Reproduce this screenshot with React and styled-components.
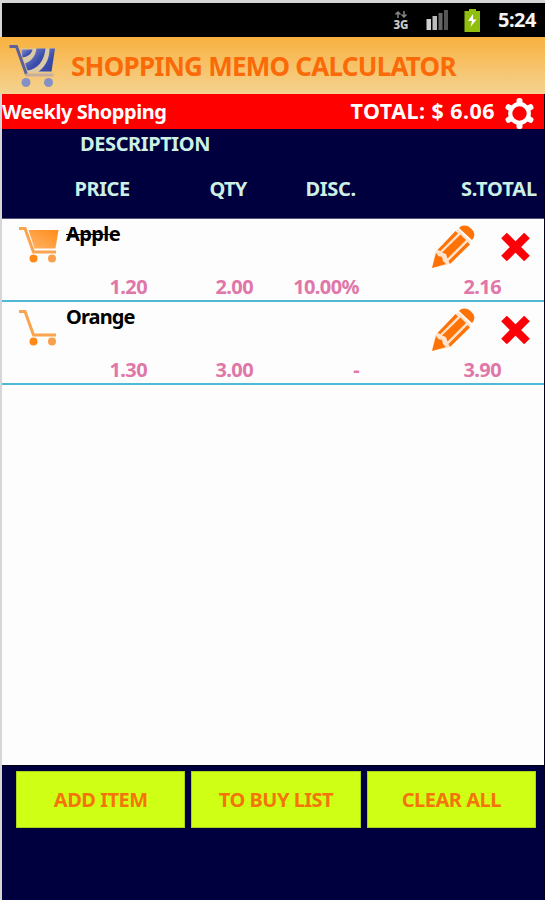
import styled, { createGlobalStyle } from 'styled-components';

const GlobalStyle = createGlobalStyle`
  * {
    box-sizing: border-box;
  }
  body {
    margin: 0;
    background: #d6d6d8;
  }
`;

const Screen = styled.div`
  width: 545px;
  height: 900px;
  padding-top: 3px;
  display: flex;
  flex-direction: column;
  overflow: hidden;
  background: #d6d6d8;
  font-family: 'Noto Sans', 'Open Sans', sans-serif;
  font-weight: 700;
  font-size: 20px;
  white-space: nowrap;
`;

const StatusBar = styled.div`
  height: 34px;
  flex: none;
  margin-left: 2px;
  padding-right: 9px;
  display: flex;
  align-items: center;
  justify-content: flex-end;
  background: #000;
`;

const StatusIcon = styled.svg`
  flex: none;
  display: block;
  margin-right: ${(props) => props.$gap}px;
`;

const Clock = styled.span`
  color: #f4f4f4;
  font-size: 20px;
  line-height: 34px;
  letter-spacing: -0.5px;
`;

const Header = styled.header`
  height: 57px;
  flex: none;
  padding-left: 8px;
  display: flex;
  align-items: center;
  background: linear-gradient(#f8b13f, #f5d391);
`;

const Title = styled.h1`
  margin: 0 0 0 13px;
  padding-top: 2px;
  color: #fb6a08;
  font-size: 26px;
  line-height: 55px;
  letter-spacing: -0.75px;
`;

const Body = styled.div`
  flex: 1;
  margin-left: 2px;
  display: flex;
  flex-direction: column;
  border-right: 1px solid #000018;
`;

const TotalBar = styled.div`
  height: 35px;
  flex: none;
  padding-right: 9px;
  display: flex;
  background: #fe0000;
  color: #fff;
  line-height: 35px;
`;

const ListName = styled.span`
  flex: 1;
  letter-spacing: -0.45px;
`;

const Total = styled.span`
  font-size: 21.5px;
  line-height: 34px;
  letter-spacing: 0.45px;
  margin-right: 9px;
`;

const GearIcon = styled.svg`
  display: block;
  margin-top: 4px;
`;

const TableHead = styled.div`
  height: 90px;
  flex: none;
  background: #00003f;
  color: #cdf0e4;
  line-height: 29px;
  letter-spacing: -0.4px;
  border-bottom: 1px solid #55557a;
`;

const HeadDescription = styled.div`
  padding-left: 78px;
`;

const HeadColumns = styled.div`
  margin-top: 16px;
  padding: 0 7px 0 72.5px;
  display: grid;
  grid-template-columns: 135px 96px 1fr auto;
`;

const HeadCell = styled.span`
  letter-spacing: ${(props) => props.$spacing}px;
`;

const List = styled.div`
  flex: 1;
  background: #fdfdfd;
`;

const Row = styled.div`
  height: 83px;
  border-bottom: 2px solid #50b9d6;
`;

const RowTop = styled.div`
  height: 54px;
  padding: 0 13px 0 16px;
  display: flex;
`;

const CartIcon = styled.svg`
  display: block;
  margin: 7px 6px 0 0;
`;

const ItemName = styled.span`
  flex: 1;
  color: #000;
  line-height: 30px;
  letter-spacing: ${(props) => (props.$bought ? -0.6 : -0.9)}px;
  text-decoration: ${(props) => (props.$bought ? 'line-through' : 'none')};
  text-decoration-thickness: 1px;
`;

const ActionIcon = styled.svg`
  display: block;
  margin: ${(props) => props.$top}px 0 0 ${(props) => props.$left}px;
`;

const Figures = styled.div`
  display: grid;
  grid-template-columns: 145px 106px 106px 142px;
  color: #e077a8;
  line-height: 27px;
  letter-spacing: -0.6px;
  text-align: right;
`;

const Footer = styled.footer`
  height: 135px;
  flex: none;
  padding: 5px 8px 0 14px;
  display: flex;
  align-items: flex-start;
  gap: 6px;
  background: #00003f;
  border-top: 1px solid #000010;
`;

const Button = styled.button`
  flex: 1;
  height: 57px;
  padding: 0;
  border: 1px solid #a9d41c;
  background: #d0ff16;
  color: #f5740a;
  font: inherit;
  letter-spacing: -0.5px;
`;

const items = [
  { name: 'Apple', price: '1.20', qty: '2.00', disc: '10.00%', total: '2.16', bought: true },
  { name: 'Orange', price: '1.30', qty: '3.00', disc: '-', total: '3.90', bought: false },
];

const Logo = () => (
  <svg width="50" height="46" viewBox="0.500 0.500 50 46" fill="none">
    <defs>
      <linearGradient id="logo" x1="0" y1="0" x2="1" y2="1">
        <stop offset="0" stopColor="#8a95cb" />
        <stop offset="0.6" stopColor="#3a4cab" />
        <stop offset="1" stopColor="#33409a" />
      </linearGradient>
    </defs>
    <path d="M13 6H47L43 30H19Z" fill="#dcc9a6" />
    <path d="M14 7H25C24 11 21 14 15 15Z" fill="url(#logo)" />
    <path d="M29 6H38C37 18 30 27 20 28L17.500 21C25 18 28 13 29 6Z" fill="url(#logo)" />
    <path d="M42 6H47.500L44 29H31C39 23 42 15 42 6Z" fill="url(#logo)" />
    <path d="M2 4H9L19 32" stroke="#5c619c" strokeWidth="3" />
    <path d="M18 32.500H46" stroke="#c5aea0" strokeWidth="3" />
    <circle cx="18.500" cy="40" r="4.500" fill="#8490c6" />
    <circle cx="41" cy="40" r="4.500" fill="#8490c6" />
  </svg>
);

const Cart = ({ full }) => (
  <CartIcon width="42" height="38" viewBox="0 0 42 38" fill="none">
    <defs>
      <linearGradient id="cart" x1="0" y1="1" x2="1" y2="0">
        <stop offset="0" stopColor="#ffb366" />
        <stop offset="1" stopColor="#ff8c1a" />
      </linearGradient>
    </defs>
    {full && <path d="M10.500 4H40.500L37.500 22.500H16.500Z" fill="url(#cart)" />}
    <path d="M1 2.500H7L15.500 26H38" stroke="#fba44f" strokeWidth="3" />
    <circle cx="15.500" cy="32.500" r="4" fill="#ff8a17" />
    <circle cx="34" cy="32.500" r="4" fill="#fba04a" />
  </CartIcon>
);

const Pencil = () => (
  <ActionIcon $top={6} $left={0} width="44" height="44" viewBox="0 0 44 44">
    <path d="M27 4L40 17L17 40L1 43L4 27Z" fill="#ffe3cc" />
    <g fill="#ff7306">
      <path d="M28 3C31 -1 37 0 40 3.500C44 7 44.500 11 41 15Z" />
      <path d="M24.500 6L27 8.500L9.500 26L6.500 25Z" />
      <path d="M29.500 9.500L35 15L16.500 33.500L15 29L11 27.500Z" />
      <path d="M36.500 17L39 19.500L19 39L17.500 36Z" />
      <path d="M5 28L7.500 31L11 32L12 36L15 39L1 43Z" />
    </g>
  </ActionIcon>
);

const Cross = () => (
  <ActionIcon $top={13} $left={25} width="31" height="31" viewBox="0 0 31 31">
    <path d="M4 3.500L27 26.500M27 3.500L4 26.500" stroke="#fb0007" strokeWidth="8" />
  </ActionIcon>
);

const Gear = () => (
  <GearIcon width="31" height="31" viewBox="-15.5 -15.500 31 31">
    {[0, 60, 120, 180, 240, 300].map((angle) => (
      <rect key={angle} x="-3" y="-15.500" width="6" height="8" rx="2.500" fill="#fff" transform={`rotate(${angle})`} />
    ))}
    <circle r="9.300" fill="none" stroke="#fff" strokeWidth="4.200" />
  </GearIcon>
);

const App = () => {
  return (
    <>
      <GlobalStyle />
      <Screen>
        <StatusBar>
          <StatusIcon $gap={17} width="16" height="22" viewBox="0 0 16 22">
            <path d="M5 9V3M2.500 5.500L5 3L7.500 5.500M11 2V8M8.500 5.500L11 8L13.500 5.500" fill="none" stroke="#888" strokeWidth="1.500" />
            <text x="8" y="20" textAnchor="middle" fontSize="11.500" fontWeight="800" fill="#c9c9c9">3G</text>
          </StatusIcon>
          <StatusIcon $gap={15} width="23" height="22" viewBox="0 0 23 22">
            <rect x="0.500" y="10" width="4.500" height="11" fill="#d0d0d0" />
            <rect x="6.500" y="7" width="4.500" height="14" fill="#bcbcbc" />
            <rect x="12.500" y="4" width="4" height="17" fill="#666" />
            <rect x="18" y="1" width="4" height="20" fill="#555" />
          </StatusIcon>
          <StatusIcon $gap={17} width="17" height="23" viewBox="0 0 17 23">
            <path d="M5 0H12V2H16V23H0.500V2H5Z" fill="#8fbf0c" />
            <path d="M9 5L4 12H8L6.500 18L12.500 10.500H9Z" fill="#fff" />
          </StatusIcon>
          <Clock>5:24</Clock>
        </StatusBar>
        <Header>
          <Logo />
          <Title>SHOPPING MEMO CALCULATOR</Title>
        </Header>
        <Body>
          <TotalBar>
            <ListName>Weekly Shopping</ListName>
            <Total>TOTAL: $ 6.06</Total>
            <Gear />
          </TotalBar>
          <TableHead>
            <HeadDescription>DESCRIPTION</HeadDescription>
            <HeadColumns>
              <HeadCell $spacing={-0.4}>PRICE</HeadCell>
              <HeadCell $spacing={-0.7}>QTY</HeadCell>
              <HeadCell $spacing={-0.3}>DISC.</HeadCell>
              <HeadCell $spacing={-0.1}>S.TOTAL</HeadCell>
            </HeadColumns>
          </TableHead>
          <List>
            {items.map((item) => (
              <Row key={item.name}>
                <RowTop>
                  <Cart full={item.bought} />
                  <ItemName $bought={item.bought}>{item.name}</ItemName>
                  <Pencil />
                  <Cross />
                </RowTop>
                <Figures>
                  <span>{item.price}</span>
                  <span>{item.qty}</span>
                  <span>{item.disc}</span>
                  <span>{item.total}</span>
                </Figures>
              </Row>
            ))}
          </List>
          <Footer>
            <Button>ADD ITEM</Button>
            <Button>TO BUY LIST</Button>
            <Button>CLEAR ALL</Button>
          </Footer>
        </Body>
      </Screen>
    </>
  );
};

export default App;
